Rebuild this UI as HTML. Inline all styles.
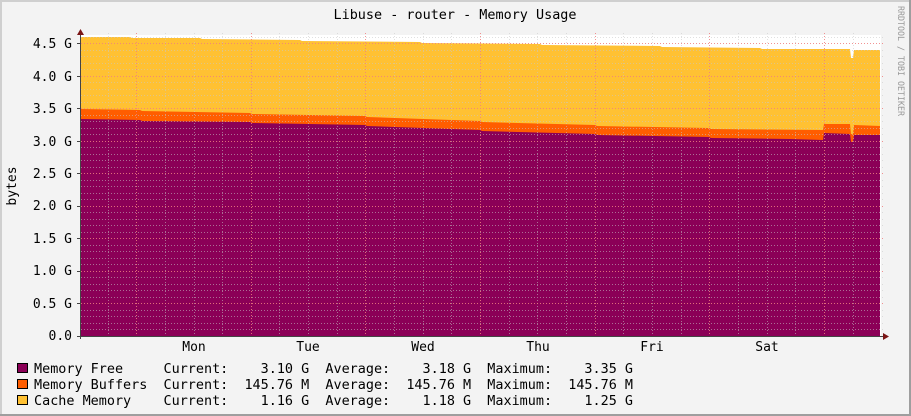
<!DOCTYPE html>
<html><head><meta charset="utf-8"><style>
html,body{margin:0;padding:0;background:#f3f3f3;}
svg{display:block;}
text{font-family:"DejaVu Sans Mono","Liberation Mono",monospace;font-size:13px;fill:#000;}
</style></head><body>
<svg width="911" height="416" viewBox="0 0 911 416" xmlns="http://www.w3.org/2000/svg">
<rect x="0" y="0" width="911" height="416" fill="#f3f3f3"/>
<rect x="0" y="0" width="911" height="2" fill="#cfcfcf"/>
<rect x="0" y="0" width="2" height="416" fill="#cfcfcf"/>
<rect x="909" y="0" width="2" height="416" fill="#9e9e9e"/>
<rect x="0" y="414" width="911" height="2" fill="#9e9e9e"/>
<rect x="81" y="35" width="800" height="301" fill="#ffffff"/>
<polygon fill="#ffc133" points="81,336 81,37 130,37 132,38 200,38 202,39 300,40 302,41 420,42 422,43 540,44 542,45 660,46 662,47 760,48 762,49 850,49 851,58 853,58 854,50 880,50 880,336"/>
<polygon fill="#ff5d00" points="81,336 81,109 140,110 142,111 250,113 252,114 365,116 367,117 480,121 482,122 595,125 597,126 709,128 711,129 823,130 824,124 850,124 851,134 853,134 854,125 880,126 880,336"/>
<polygon fill="#8b0057" points="81,336 81,119 140,120 142,121 250,122 252,123 365,125 367,126 480,130 482,131 595,134 597,135 709,137 711,138 790,139 823,140 824,133 850,134 851,142 853,142 854,135 880,135 880,336"/>
<g stroke-width="1" fill="none" shape-rendering="crispEdges">
<g stroke="#c8c8c8" stroke-dasharray="1,2" opacity="0.55">
<path d="M81 329.5H883M81 323.5H883M81 316.5H883M81 310.5H883M81 297.5H883M81 290.5H883M81 284.5H883M81 277.5H883M81 264.5H883M81 258.5H883M81 251.5H883M81 245.5H883M81 232.5H883M81 225.5H883M81 219.5H883M81 212.5H883M81 199.5H883M81 193.5H883M81 186.5H883M81 180.5H883M81 167.5H883M81 160.5H883M81 154.5H883M81 147.5H883M81 134.5H883M81 128.5H883M81 121.5H883M81 115.5H883M81 102.5H883M81 95.5H883M81 89.5H883M81 82.5H883M81 69.5H883M81 63.5H883M81 56.5H883M81 50.5H883M81 37.5H883"/>
<path d="M108.5 33V336M165.5 33V336M194.5 33V336M222.5 33V336M279.5 33V336M308.5 33V336M337.5 33V336M394.5 33V336M423.5 33V336M451.5 33V336M509.5 33V336M537.5 33V336M566.5 33V336M623.5 33V336M652.5 33V336M681.5 33V336M738.5 33V336M767.5 33V336M795.5 33V336M853.5 33V336"/>
</g>
<g stroke="#f08080" stroke-dasharray="1,2" opacity="0.85">
<path d="M81 303.5H883M81 271.5H883M81 238.5H883M81 206.5H883M81 173.5H883M81 141.5H883M81 108.5H883M81 76.5H883M81 43.5H883"/>
<path d="M136.5 33V339M251.5 33V339M365.5 33V339M480.5 33V339M595.5 33V339M709.5 33V339M824.5 33V339"/>
</g>
</g>
<path d="M80.5 32V339M77 336.5H885" stroke="#444" stroke-width="1" fill="none" shape-rendering="crispEdges"/>
<path d="M77 303.5H80M77 271.5H80M77 238.5H80M77 206.5H80M77 173.5H80M77 141.5H80M77 108.5H80M77 76.5H80M77 43.5H80" stroke="#444" shape-rendering="crispEdges"/>
<polygon points="77,35 80.5,29 84,35" fill="#7a1515"/>
<polygon points="883,333 889,336.5 883,340" fill="#7a1515"/>
<text x="455" y="19" text-anchor="middle" textLength="243" lengthAdjust="spacingAndGlyphs">Libuse - router - Memory Usage</text>
<g text-anchor="end">
<text x="72" y="340">0.0</text><text x="72" y="308">0.5 G</text><text x="72" y="275">1.0 G</text><text x="72" y="243">1.5 G</text><text x="72" y="210">2.0 G</text><text x="72" y="178">2.5 G</text><text x="72" y="146">3.0 G</text><text x="72" y="113">3.5 G</text><text x="72" y="81">4.0 G</text><text x="72" y="48">4.5 G</text>
</g>
<text transform="translate(16,186) rotate(-90)" text-anchor="middle">bytes</text>
<g text-anchor="middle">
<text x="194" y="351">Mon</text><text x="308" y="351">Tue</text><text x="423" y="351">Wed</text><text x="538" y="351">Thu</text><text x="652" y="351">Fri</text><text x="767" y="351">Sat</text>
</g>
<text transform="translate(898,6) rotate(90)" style="font-size:9px;fill:#999" textLength="110" lengthAdjust="spacingAndGlyphs">RRDTOOL / TOBI OETIKER</text>
<rect x="17.5" y="363.5" width="10" height="9" fill="#8b0057" stroke="#000"/>
<rect x="17.5" y="379.5" width="10" height="9" fill="#ff5d00" stroke="#000"/>
<rect x="17.5" y="395.5" width="10" height="9" fill="#ffc133" stroke="#000"/>
<text x="34" y="373" xml:space="preserve" textLength="599" lengthAdjust="spacingAndGlyphs">Memory Free     Current:    3.10 G  Average:    3.18 G  Maximum:    3.35 G</text>
<text x="34" y="389" xml:space="preserve" textLength="599" lengthAdjust="spacingAndGlyphs">Memory Buffers  Current:  145.76 M  Average:  145.76 M  Maximum:  145.76 M</text>
<text x="34" y="405" xml:space="preserve" textLength="599" lengthAdjust="spacingAndGlyphs">Cache Memory    Current:    1.16 G  Average:    1.18 G  Maximum:    1.25 G</text>
</svg>
</body></html>
